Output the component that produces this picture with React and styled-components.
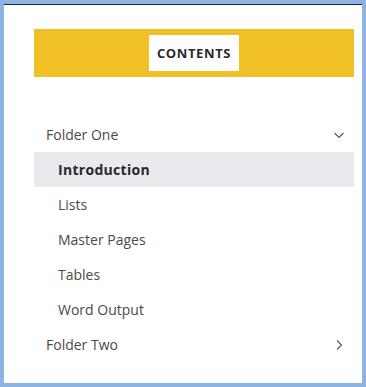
import React from "react";
import styled, { createGlobalStyle } from "styled-components";

const GlobalStyle = createGlobalStyle`
  html, body {
    margin: 0;
    padding: 0;
    background: #8db3e2;
  }
  body {
    font-family: "Open Sans", "Liberation Sans", sans-serif;
  }
`;

const Frame = styled.div`
  margin: 4px;
  width: 358px;
  height: 379px;
  box-sizing: border-box;
  background: #fff;
  border-top: 1px solid #1f2230;
  padding: 24px 8px 0 30px;
`;

const Header = styled.div`
  height: 48px;
  background: #f0c026;
  display: flex;
  align-items: center;
  justify-content: center;
`;

const Title = styled.div`
  width: 90px;
  height: 36px;
  background: #fff;
  display: flex;
  align-items: center;
  justify-content: center;
  font-size: 13px;
  font-weight: 700;
  color: #2a2a2a;
  letter-spacing: 0.6px;
`;

const Nav = styled.nav`
  margin-top: 40px;
  display: flex;
  flex-direction: column;
`;

const Row = styled.div`
  height: 35px;
  display: flex;
  align-items: center;
  justify-content: space-between;
  padding: 0 9px 0 ${(p) => (p.$child ? 24 : 12)}px;
  font-size: 14px;
  color: ${(p) => (p.$active ? "#2a2a2a" : "#4a4a4a")};
  font-weight: ${(p) => (p.$active ? 700 : 400)};
  letter-spacing: ${(p) => (p.$active ? "0.3px" : "0")};
  background: ${(p) => (p.$active ? "#e9e9ee" : "transparent")};
`;

const Chevron = ({ open }) => (
  <svg width="12" height="12" viewBox="0 0 12 12" fill="none">
    {open ? (
      <path d="M1.5 4 L6 8.5 L10.5 4" stroke="#555" strokeWidth="1.1" />
    ) : (
      <path d="M4 1.5 L8.5 6 L4 10.5" stroke="#555" strokeWidth="1.1" />
    )}
  </svg>
);

const pages = ["Introduction", "Lists", "Master Pages", "Tables", "Word Output"];

export default function App() {
  return (
    <>
      <GlobalStyle />
      <Frame>
        <Header>
          <Title>CONTENTS</Title>
        </Header>
        <Nav>
          <Row>
            <span>Folder One</span>
            <Chevron open />
          </Row>
          {pages.map((p, i) => (
            <Row key={p} $child $active={i === 0}>
              <span>{p}</span>
            </Row>
          ))}
          <Row>
            <span>Folder Two</span>
            <Chevron />
          </Row>
        </Nav>
      </Frame>
    </>
  );
}
